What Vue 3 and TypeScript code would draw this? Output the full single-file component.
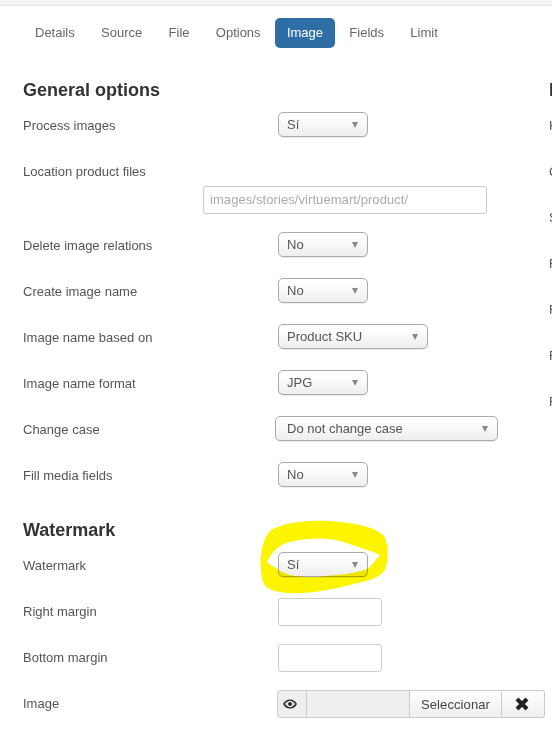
<script setup lang="ts">
const tabs = ['Details', 'Source', 'File', 'Options', 'Image', 'Fields', 'Limit']
const activeTab = 'Image'

const generalRows = [
  { label: 'Delete image relations', value: 'No', size: 'sm' },
  { label: 'Create image name', value: 'No', size: 'sm' },
  { label: 'Image name based on', value: 'Product SKU', size: 'md' },
  { label: 'Image name format', value: 'JPG', size: 'sm' },
  { label: 'Change case', value: 'Do not change case', size: 'lg' },
  { label: 'Fill media fields', value: 'No', size: 'sm' },
]

// only the first letter of the second column shows before the window edge
const sideRows = ['K', 'C', 'S', 'R', 'R', 'R', 'R']
</script>

<template>
  <div class="page">
    <div class="topbar"></div>
    <ul class="tabs">
      <li v-for="tab in tabs" :key="tab" :class="['tab', { active: tab === activeTab }]">{{ tab }}</li>
    </ul>

    <div class="columns">
      <div class="main">
        <h3 class="first">General options</h3>

        <div class="row">
          <span class="label">Process images</span>
          <div class="select sm">Sí<i class="arrow"></i></div>
        </div>

        <div class="row location">
          <span class="label">Location product files</span>
          <div class="text-input path">images/stories/virtuemart/product/</div>
        </div>

        <div v-for="row in generalRows" :key="row.label" class="row">
          <span class="label">{{ row.label }}</span>
          <div :class="['select', row.size]">{{ row.value }}<i class="arrow"></i></div>
        </div>

        <h3 class="second">Watermark</h3>

        <div class="row">
          <span class="label">Watermark</span>
          <div class="select sm">Sí<i class="arrow"></i></div>
        </div>
        <div class="row">
          <span class="label">Right margin</span>
          <div class="text-input margin"></div>
        </div>
        <div class="row">
          <span class="label">Bottom margin</span>
          <div class="text-input margin"></div>
        </div>
        <div class="row">
          <span class="label">Image</span>
          <div class="media">
            <span class="eye">
              <svg width="14" height="10" viewBox="0 0 14 10">
                <path
                  fill="#222"
                  fill-rule="evenodd"
                  d="M0 5C1.6 2 4 .4 7 .4S12.4 2 14 5c-1.6 3-4 4.6-7 4.6S1.600 8 0 5zM7 1.800a3.200 3.200 0 1 0 0 6.400 3.200 3.200 0 0 0 0-6.400zM1.700 5c.7 1 1.500 1.800 2.500 2.400A4.200 4.200 0 0 1 4.200 2.600C3.200 3.200 2.400 4 1.700 5zm8.100-2.400a4.200 4.200 0 0 1 0 4.800c1-.6 1.800-1.400 2.500-2.400-.7-1-1.500-1.800-2.500-2.400z"
                />
                <circle cx="7" cy="5" r="1.900" fill="#222" />
              </svg>
            </span>
            <span class="field"></span>
            <span class="btn choose">Seleccionar</span>
            <span class="btn clear">
              <svg width="14" height="14" viewBox="0 0 14 14">
                <path d="M2 2l10 10M12 2L2 12" stroke="#222" stroke-width="4" />
              </svg>
            </span>
          </div>
        </div>
      </div>

      <div class="side">
        <h3 class="first">I</h3>
        <div v-for="(letter, i) in sideRows" :key="i" class="row">
          <span class="label">{{ letter }}</span>
        </div>
      </div>
    </div>

    <!-- hand drawn marker ring around the Watermark select -->
    <svg class="marker" width="552" height="736" viewBox="0 0 552 736">
      <path
        fill="#fdf500"
        fill-rule="evenodd"
        d="M262 578C258 560 262 538 271 530C285 522 310 520 330 521C352 523 375 526 384 536C389 545 388 560 386 567C382 578 370 580 350 585C330 590 300 596 280 592C268 590 263 586 262 578Z
           M267 562C272 552 278 545 290 542C305 538 325 537 340 541C355 546 372 551 380 555C375 561 371 566 367 569C355 574 335 575 318 577C300 578 283 575 276 568C272 566 269 564 267 562Z"
      />
    </svg>
  </div>
</template>

<style>
html,
body {
  margin: 0;
  background: #fff;
  overflow: hidden;
}
</style>

<style scoped>
.page {
  position: relative;
  width: 552px;
  height: 736px;
  overflow: hidden;
  font-family: 'Liberation Sans', Arial, sans-serif;
  font-size: 13px;
  color: #555;
}
.topbar {
  height: 5px;
  background: #f5f5f5;
  border-bottom: 1px solid #e3e3e3;
}
.tabs {
  display: flex;
  gap: 2.3px;
  list-style: none;
  margin: 12px 0 0;
  padding: 0 0 0 23px;
}
.tab {
  height: 30px;
  line-height: 30px;
  padding: 0 12px;
  border-radius: 5px;
  color: #666;
}
.tab.active {
  background: #2f6ea5;
  color: #fff;
}
.columns {
  display: flex;
  padding-left: 23px;
}
.main {
  flex: none;
  width: 526px;
}
.side {
  flex: none;
  width: 200px;
}
h3 {
  margin: 0;
  font-size: 18px;
  line-height: 20px;
  font-weight: bold;
  color: #333;
}
h3.first {
  margin-top: 32px;
  margin-bottom: 12px;
}
h3.second {
  margin-top: 32px;
  margin-bottom: 12px;
}
.row {
  display: flex;
  height: 26px;
  margin-bottom: 20px;
}
.row.location {
  display: block;
  height: auto;
  margin-bottom: 18px;
}
.label {
  display: block;
  flex: none;
  width: 255px;
  height: 26px;
  line-height: 28px;
  color: #555;
}
.select {
  position: relative;
  box-sizing: border-box;
  height: 25px;
  line-height: 23px;
  padding-left: 8px;
  border: 1px solid #aaa;
  border-radius: 5px;
  background: linear-gradient(#fff 15%, #eee 100%);
  box-shadow: 0 1px 1px rgba(0, 0, 0, 0.08);
  color: #555;
}
.select.sm {
  width: 90px;
}
.select.md {
  width: 150px;
}
.select.lg {
  width: 223px;
  margin-left: -3px;
  padding-left: 11px;
}
.arrow {
  position: absolute;
  right: 9px;
  top: 9px;
  width: 0;
  height: 0;
  border-left: 3.5px solid transparent;
  border-right: 3.5px solid transparent;
  border-top: 6px solid #888;
}
.text-input {
  box-sizing: border-box;
  height: 28px;
  border: 1px solid #ccc;
  border-radius: 3px;
  background: #fff;
}
.text-input.path {
  width: 284px;
  margin: 2px 0 0 180px;
  padding-left: 6px;
  line-height: 25px;
  letter-spacing: 0.07px;
  color: #aaa;
}
.text-input.margin {
  width: 104px;
}
.media {
  display: flex;
  height: 28px;
  margin-left: -1px;
}
.media > span {
  box-sizing: border-box;
  height: 28px;
  display: flex;
  align-items: center;
  justify-content: center;
  border: 1px solid #ccc;
  border-left: 0;
  background: #eee;
}
.media .eye {
  width: 30px;
  padding-right: 5px;
  border-left: 1px solid #ccc;
  border-radius: 3px 0 0 3px;
}
.media .field {
  width: 103px;
}
.media .btn {
  background: linear-gradient(#fff 0%, #efefef 100%);
  color: #444;
}
.media .choose {
  width: 92px;
  letter-spacing: 0.1px;
}
.media .clear {
  width: 43px;
  padding-right: 2px;
  border-radius: 0 3px 3px 0;
}
.marker {
  position: absolute;
  left: 0;
  top: 0;
  pointer-events: none;
  mix-blend-mode: multiply;
}
</style>
